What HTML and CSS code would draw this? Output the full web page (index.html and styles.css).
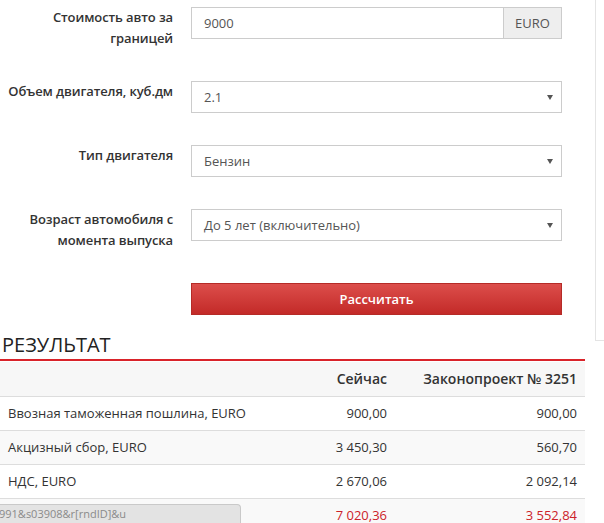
FILE: index.html
```html
<!DOCTYPE html>
<html lang="ru">
<head>
<meta charset="utf-8">
<title>Калькулятор растаможки</title>
<link rel="stylesheet" href="styles.css">
</head>
<body>
<div class="top">
  <form class="form">
    <div class="group">
      <label class="label">Стоимость авто за границей</label>
      <div class="control">
        <div class="input-group">
          <span class="input">9000</span>
          <span class="addon">EURO</span>
        </div>
      </div>
    </div>
    <div class="group">
      <label class="label">Объем двигателя, куб.дм</label>
      <div class="control">
        <div class="select"><span>2.1</span><span class="caret"></span></div>
      </div>
    </div>
    <div class="group">
      <label class="label">Тип двигателя</label>
      <div class="control">
        <div class="select"><span>Бензин</span><span class="caret"></span></div>
      </div>
    </div>
    <div class="group">
      <label class="label">Возраст автомобиля с момента выпуска</label>
      <div class="control">
        <div class="select"><span>До 5 лет (включительно)</span><span class="caret"></span></div>
      </div>
    </div>
    <div class="group last">
      <div class="label"></div>
      <div class="control">
        <button type="button" class="btn">Рассчитать</button>
      </div>
    </div>
  </form>
  <aside class="aside"></aside>
</div>
<section class="result">
  <h2 class="title">Результат</h2>
  <table class="table">
    <thead>
      <tr><th class="c1"></th><th class="c2">Сейчас</th><th class="c3">Законопроект № 3251</th></tr>
    </thead>
    <tbody>
      <tr><td>Ввозная таможенная пошлина, EURO</td><td class="num">900,00</td><td class="num">900,00</td></tr>
      <tr class="odd"><td>Акцизный сбор, EURO</td><td class="num">3 450,30</td><td class="num">560,70</td></tr>
      <tr><td>НДС, EURO</td><td class="num">2 670,06</td><td class="num">2 092,14</td></tr>
      <tr class="odd total"><td></td><td class="num">7 020,36</td><td class="num">3 552,84</td></tr>
    </tbody>
  </table>
</section>
<div class="status">991&amp;s03908&amp;r[rndID]&amp;u</div>
</body>
</html>
```

FILE: styles.css
```css
* { box-sizing: border-box; }
html, body { margin: 0; padding: 0; background: #fff; }
body {
  font-family: "Open Sans", "Liberation Sans", sans-serif;
  font-size: 13px;
  color: #333;
  width: 604px;
  height: 523px;
  overflow: hidden;
  position: relative;
}
.top { display: flex; align-items: flex-start; }
.form { width: 595px; padding-top: 7px; margin: 0; }
.aside {
  flex: 1;
  height: 341px;
  border-left: 1px solid #e4e4e4;
  border-bottom: 1px solid #e4e4e4;
}
.group { display: flex; align-items: flex-start; margin-bottom: 32px; }
.group.last { margin-bottom: 0; }
.label {
  width: 191px;
  flex: none;
  padding: 0 18px 0 8px;
  text-align: right;
  font-weight: 600;
  line-height: 21px;
  color: #333;
  letter-spacing: -0.1px;
}
.control { width: 371px; }
.input-group { display: flex; height: 32px; }
.input {
  flex: 1;
  border: 1px solid #ccc;
  padding: 0 12px;
  line-height: 30px;
  color: #555;
}
.addon {
  width: 58px;
  border: 1px solid #ccc;
  border-left: 0;
  background: #eee;
  color: #555;
  text-align: center;
  line-height: 30px;
}
.select {
  height: 32px;
  border: 1px solid #ccc;
  padding: 0 8px 0 12px;
  display: flex;
  justify-content: space-between;
  align-items: center;
  color: #555;
}
.caret {
  width: 0; height: 0;
  border-left: 3px solid transparent;
  border-right: 3px solid transparent;
  border-top: 5px solid #555;
}
.btn {
  width: 100%;
  height: 32px;
  border: 1px solid #b52b27;
  background: linear-gradient(#dc4e4b, #c32a28);
  color: #fff;
  font-family: inherit;
  font-size: 13px;
  font-weight: 600;
  padding: 0;
  cursor: pointer;
}
.result { margin-top: -9px; width: 585px; }
.title {
  margin: 0;
  font-size: 20px;
  font-weight: 400;
  line-height: 26px;
  text-transform: uppercase;
  color: #222;
  padding: 0 0 1px 2px;
  border-bottom: 2px solid #d9232a;
}
.table { width: 585px; border-collapse: collapse; margin-top: 1px; }
.table th, .table td { padding: 7px 8px 8px; line-height: 18px; font-size: 13px; }
.table th { font-size: 14px; font-weight: 600; text-align: right; background: #f7f7f7; padding-top: 8px; color: #333; }
.table td { border-top: 1px solid #ddd; text-align: left; }
.table .c1 { width: 260px; }
.table .c2 { width: 135px; }
.table td.num { text-align: right; }
.table .odd td { background: #f9f9f9; }
.table .total td { color: #cc2229; }
.status {
  position: absolute;
  left: 0;
  bottom: 0;
  width: 241px;
  height: 19px;
  background: #e3e3e3;
  border: 1px solid #c9c9c9;
  border-left: 0;
  border-bottom: 0;
  border-top-right-radius: 4px;
  font-size: 11px;
  line-height: 17px;
  color: #8a8a8a;
  padding-left: 0;
  text-indent: -1px;
  white-space: nowrap;
  overflow: hidden;
}
```
